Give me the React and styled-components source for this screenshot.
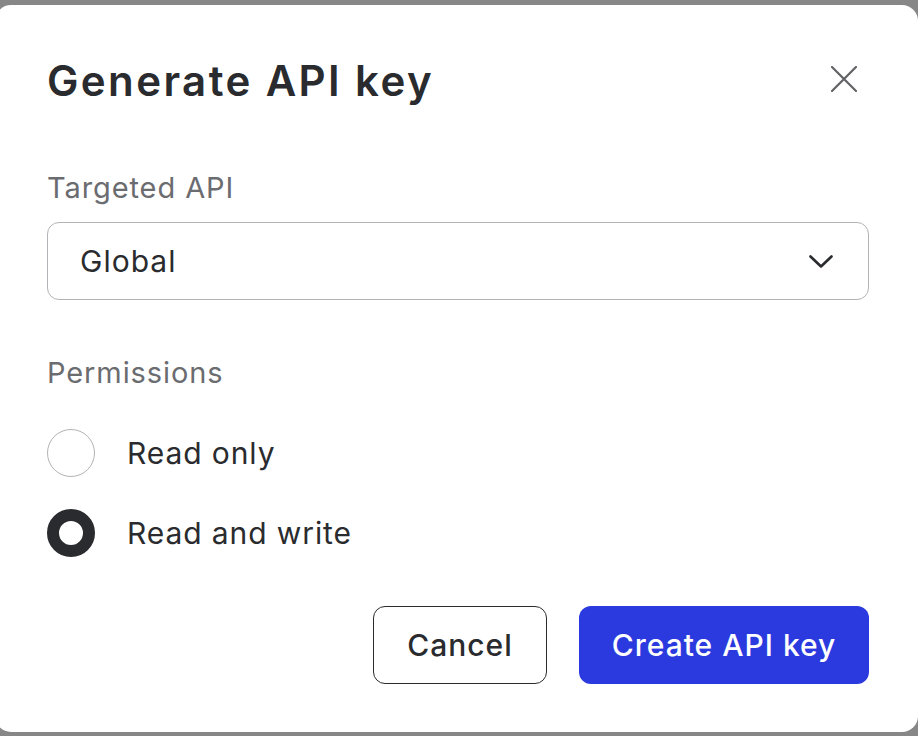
import React, { useState } from "react";
import styled, { createGlobalStyle } from "styled-components";

const GlobalStyle = createGlobalStyle`
  html, body {
    margin: 0;
    padding: 0;
    background: #878787;
    overflow: hidden;
  }
  body {
    font-family: Inter, "Noto Sans", "Liberation Sans", sans-serif;
    -webkit-font-smoothing: antialiased;
  }
  * { box-sizing: border-box; }
`;

const Backdrop = styled.div`
  width: 918px;
  height: 736px;
  padding-top: 5px;
`;

const Panel = styled.div`
  margin-left: -5px;
  width: 923px;
  height: 727px;
  background: #ffffff;
  border-radius: 16px;
  padding: 52px 49px 48px 52px;
  display: flex;
  flex-direction: column;
`;

const Header = styled.div`
  display: flex;
  align-items: center;
  justify-content: space-between;
  height: 48px;
`;

const Title = styled.h1`
  margin: 0;
  font-size: 42px;
  line-height: 48px;
  font-weight: 600;
  color: #2a2b2e;
  letter-spacing: 2.4px;
`;

const CloseButton = styled.button`
  width: 48px;
  height: 48px;
  margin-right: 1px;
  margin-top: -4px;
  padding: 0;
  border: none;
  background: transparent;
  display: flex;
  align-items: center;
  justify-content: center;
  color: #616266;
  cursor: pointer;
`;

const Label = styled.div`
  font-size: 29px;
  line-height: 36px;
  letter-spacing: 0.9px;
  color: #6b6c70;
  margin-top: ${(p) => p.$top}px;
`;

const Select = styled.div`
  margin-top: 16px;
  height: 78px;
  border: 1.5px solid #b3b3b8;
  border-radius: 12px;
  padding: 0 35px 0 32px;
  display: flex;
  align-items: center;
  justify-content: space-between;
  font-size: 30px;
  letter-spacing: 1px;
  color: #2a2b2e;
`;

const RadioList = styled.div`
  margin-top: 38px;
  display: flex;
  flex-direction: column;
  gap: 32px;
`;

const RadioRow = styled.label`
  display: flex;
  align-items: center;
  gap: 32px;
  height: 48px;
  font-size: 30px;
  letter-spacing: 0.9px;
  color: #2a2b2e;
  cursor: pointer;
`;

const RadioCircle = styled.span`
  width: 48px;
  height: 48px;
  border-radius: 50%;
  flex: none;
  background: #ffffff;
  border: ${(p) => (p.$checked ? "12px solid #2a2b2e" : "1.5px solid #b3b3b8")};
`;

const Footer = styled.div`
  margin-top: 49px;
  display: flex;
  justify-content: flex-end;
  gap: 32px;
`;

const Button = styled.button`
  height: 78px;
  width: ${(p) => p.$width}px;
  border-radius: 12px;
  font-family: inherit;
  font-size: 30px;
  letter-spacing: 1px;
  font-weight: 500;
  cursor: pointer;
  border: ${(p) => (p.$primary ? "none" : "1.5px solid #2a2b2e")};
  background: ${(p) => (p.$primary ? "#2b3ade" : "#ffffff")};
  color: ${(p) => (p.$primary ? "#ffffff" : "#2a2b2e")};
`;

const options = [
  { id: "read", label: "Read only" },
  { id: "write", label: "Read and write" },
];

export default function App() {
  const [perm, setPerm] = useState("write");
  return (
    <>
      <GlobalStyle />
      <Backdrop>
        <Panel>
          <Header>
            <Title>Generate API key</Title>
            <CloseButton aria-label="Close">
              <svg width="26" height="26" viewBox="0 0 26 26" fill="none">
                <path d="M1 1L25 25M25 1L1 25" stroke="currentColor" strokeWidth="2.2" strokeLinecap="round" />
              </svg>
            </CloseButton>
          </Header>
          <Label $top={65}>Targeted API</Label>
          <Select>
            <span>Global</span>
            <svg width="24" height="13" viewBox="0 0 24 13" fill="none">
              <path d="M1.5 1.5L12 11.5L22.5 1.5" stroke="#2a2b2e" strokeWidth="2.6" strokeLinecap="round" strokeLinejoin="round" />
            </svg>
          </Select>
          <Label $top={55}>Permissions</Label>
          <RadioList>
            {options.map((o) => (
              <RadioRow key={o.id} onClick={() => setPerm(o.id)}>
                <RadioCircle $checked={perm === o.id} />
                {o.label}
              </RadioRow>
            ))}
          </RadioList>
          <Footer>
            <Button $width={174}>Cancel</Button>
            <Button $primary $width={290}>Create API key</Button>
          </Footer>
        </Panel>
      </Backdrop>
    </>
  );
}
